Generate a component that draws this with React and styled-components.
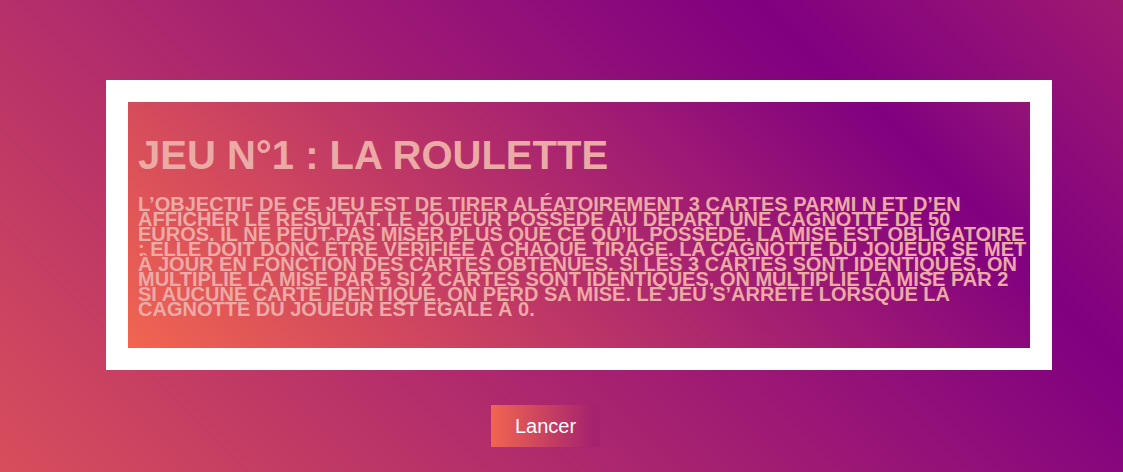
import React from "react";
import styled, { createGlobalStyle } from "styled-components";

const GlobalStyle = createGlobalStyle`
  *, *::before, *::after { box-sizing: border-box; }
  body {
    margin: 0;
    font-family: "Liberation Sans", Arial, sans-serif;
    font-size: 20px;
    color: #ecaaa6;
  }
`;

const Page = styled.main`
  min-height: 100vh;
  display: flex;
  flex-direction: column;
  padding: 80px 71px 25px 106px;
  background: linear-gradient(45deg, #d74e5b 0%, #800080 77%, #9e1a70 100%);
`;

const Card = styled.section`
  padding: 29px 10px 31px;
  border: 22px solid #fff;
  background: linear-gradient(45deg, #f16550 0%, #800080 86%, #941478 100%) padding-box;
`;

const Title = styled.h1`
  margin: 0 0 18px;
  font-size: 40px;
  line-height: 48px;
  text-transform: uppercase;
`;

const Rules = styled.p`
  margin: 0;
  font-weight: bold;
  line-height: 15px;
  text-transform: uppercase;
  white-space: nowrap;
`;

const Actions = styled.div`
  display: flex;
  justify-content: center;
  margin-top: 35px;
  padding-right: 67px;
`;

const LaunchButton = styled.button`
  padding: 9px 24px;
  border: 0;
  background: linear-gradient(90deg, #f16550, #a5226f 94%);
  color: #fff;
  font: inherit;
  line-height: 24px;
  cursor: pointer;
`;

export default function App() {
  return (
    <>
      <GlobalStyle />
      <Page>
        <Card>
          <Title>Jeu n°1 : la roulette</Title>
          <Rules>
            L’objectif de ce jeu est de tirer aléatoirement 3 cartes parmi N et d’en
            <br />
            afficher le résultat. Le joueur possède au départ une cagnotte de 50
            <br />
            euros. Il ne peut pas miser plus que ce qu’il possède. La mise est obligatoire
            <br />
            : elle doit donc être vérifiée à chaque tirage. La cagnotte du joueur se met
            <br />
            à jour en fonction des cartes obtenues. Si les 3 cartes sont identiques, on
            <br />
            multiplie la mise par 5 Si 2 cartes sont identiques, on multiplie la mise par 2
            <br />
            Si aucune carte identique, on perd sa mise. Le jeu s’arrête lorsque la
            <br />
            cagnotte du joueur est égale à 0.
          </Rules>
        </Card>
        <Actions>
          <LaunchButton type="button">Lancer</LaunchButton>
        </Actions>
      </Page>
    </>
  );
}
